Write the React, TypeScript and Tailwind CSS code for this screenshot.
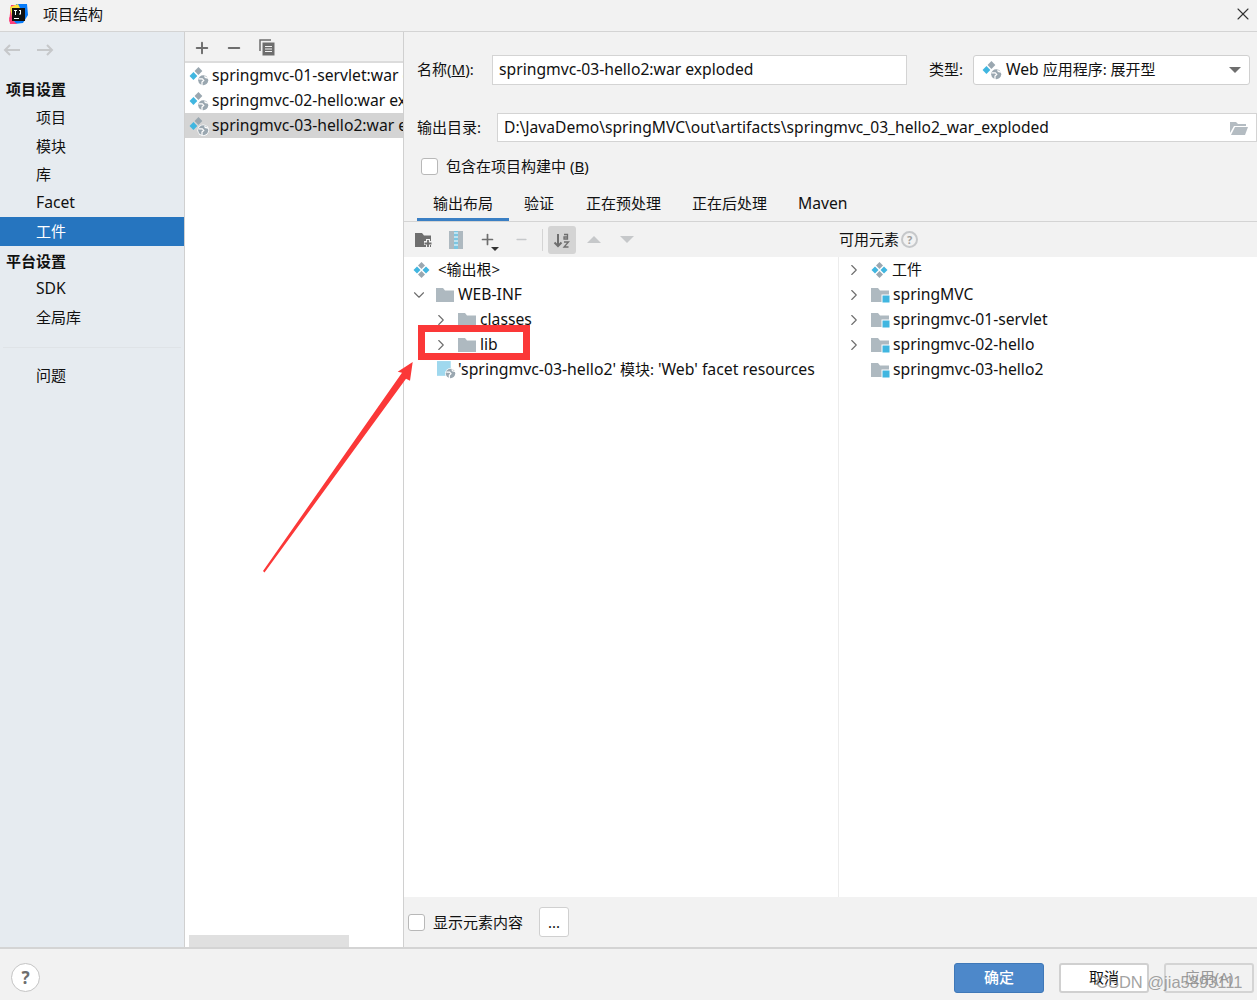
import { ChevronDown, ChevronRight, Minus, Plus, X } from 'lucide-react';

const FONT = "font-['Noto_Sans','Noto_Sans_CJK_SC',sans-serif]";

// latin runs in the reference come out a little wider than the CJK ones
function sizeFor(text: string) {
  return /[a-z]/i.test(text) ? 'text-[15.7px]' : 'text-[15px]';
}

function GlobeBadge() {
  return (
    <>
      <circle cx="12.800" cy="12.800" r="5.200" fill="#fff" />
      <circle cx="12.800" cy="12.800" r="4.500" fill="#9aa7b0" />
      <path d="M8.800 11.500h3.200l1.300 1.500-1.600 1.500v2.800M14.200 8.600l.4 1.700 2.600.6" stroke="#fff" strokeWidth="1.100" fill="none" />
    </>
  );
}

function ArtifactIcon({ globe = false, size = 18 }: { globe?: boolean; size?: number }) {
  return (
    <svg width={size} height={size} viewBox="0 0 18 18" className="shrink-0">
      <path d="M8.500 1 12 4.500 8.500 8 5 4.500Z" fill="#9aa7b0" />
      <path d="M4 5.500 7.500 9 4 12.500.5 9Z" fill="#40b6e0" />
      {globe ? (
        <GlobeBadge />
      ) : (
        <>
          <path d="M13 5.500 16.500 9 13 12.500 9.500 9Z" fill="#40b6e0" />
          <path d="M8.500 10 12 13.500 8.500 17 5 13.500Z" fill="#9aa7b0" />
        </>
      )}
    </svg>
  );
}

function FolderIcon({ module = false }: { module?: boolean }) {
  return (
    <svg width="19" height="16" viewBox="0 0 19 16" className="shrink-0">
      <path d="M0 1h7l2 2.500h9V15H0Z" fill="#aeb9c0" />
      {module && <rect x="11" y="8" width="8" height="8" fill="#40b6e0" stroke="#fff" strokeWidth="1" />}
    </svg>
  );
}

function NavItem({ label, active = false }: { label: string; active?: boolean }) {
  return (
    <div className={`h-[28.5px] pl-9 flex items-center ${sizeFor(label)} ${active ? 'bg-[#2675bf] text-white' : 'text-[#111]'}`}>
      {label}
    </div>
  );
}

function TreeRow({ indent, arrow, label, icon }: { indent: string; arrow?: 'right' | 'down'; label: string; icon: React.ReactNode }) {
  return (
    <div className={`h-[25px] flex items-center text-[#111] whitespace-nowrap ${indent} ${sizeFor(label)}`}>
      <span className="w-[26px] shrink-0 flex justify-start text-[#6e6e6e]">
        {arrow === 'right' && <ChevronRight size={18} strokeWidth={1.5} />}
        {arrow === 'down' && <ChevronDown size={18} strokeWidth={1.5} />}
      </span>
      {icon}
      <span className="ml-[3px]">{label}</span>
    </div>
  );
}

function Checkbox() {
  return <span className="w-[17px] h-[17px] rounded-[3px] bg-white border border-[#b8b8b8] shrink-0" />;
}

export default function App() {
  const artifacts = ['springmvc-01-servlet:war exploded', 'springmvc-02-hello:war exploded', 'springmvc-03-hello2:war exploded'];
  const modules = ['springMVC', 'springmvc-01-servlet', 'springmvc-02-hello'];

  return (
    <div className={`relative w-[1257px] h-[1000px] overflow-hidden flex flex-col bg-[#f2f2f2] text-[#111] ${FONT}`}>
      {/* title bar */}
      <div className="h-[32px] shrink-0 flex items-center pl-[8px] pr-[4px] pb-[3px] border-b border-[#d4d4d4]">
        <svg width="21" height="21" viewBox="0 0 21 21">
          <path d="M3 1h9L5 14 1 18Z" fill="#fc3f7a" />
          <path d="M8 0h11l1 11-5 8-9 1Z" fill="#087cfa" />
          <path d="M2 3 10 0l3 6-9 7Z" fill="#fde13a" />
          <path d="M1 13l8 7-7 0Z" fill="#fc3f7a" />
          <rect x="4" y="4" width="13" height="13" fill="#111" />
          <rect x="6" y="14" width="5" height="1" fill="#fff" />
          <path d="M6 6h3v1H8v4H7V7H6Zm5 0h2v4.500h-2v-1h1V7h-1Z" fill="#fff" />
        </svg>
        <span className="ml-[14px] text-[15px]">项目结构</span>
        <X size={20} strokeWidth={1.3} className="ml-auto text-[#333]" />
      </div>

      <div className="flex-1 flex min-h-0">
        {/* sidebar */}
        <aside className="w-[185px] shrink-0 bg-[#e6ebf0] border-r border-[#d0d0d0] flex flex-col">
          <div className="h-[36px] flex items-center pl-[3px] gap-[15px]">
            <svg width="18" height="14" viewBox="0 0 18 14" fill="none" stroke="#c6c8ca" strokeWidth="2"><path d="M17 7H2M7 2 2 7l5 5" /></svg>
            <svg width="18" height="14" viewBox="0 0 18 14" fill="none" stroke="#c6c8ca" strokeWidth="2"><path d="M1 7h15M11 2l5 5-5 5" /></svg>
          </div>
          <div className="h-[28px] mt-[7px] pl-[6px] flex items-center text-[15px] font-bold">项目设置</div>
          <NavItem label="项目" />
          <NavItem label="模块" />
          <NavItem label="库" />
          <NavItem label="Facet" />
          <NavItem label="工件" active />
          <div className="h-[26px] mt-[3px] pl-[6px] flex items-center text-[15px] font-bold">平台设置</div>
          <NavItem label="SDK" />
          <NavItem label="全局库" />
          <div className="h-px mt-[15px] mb-[13px] mx-[3px] bg-[#dfe3e7]" />
          <NavItem label="问题" />
        </aside>

        {/* artifact list */}
        <section className="w-[219px] shrink-0 bg-white border-r border-[#d0d0d0] flex flex-col overflow-hidden">
          <div className="h-[31px] shrink-0 bg-[#f2f2f2] border-b-2 border-[#dcdcdc] flex items-center pl-[8px] pt-[2px] text-[#6e6e6e]">
            <Plus size={18} strokeWidth={2.6} />
            <Minus size={18} strokeWidth={2.6} className="ml-[14px]" />
            <svg width="16" height="17" viewBox="0 0 16 17" className="ml-[16px]" fill="none" stroke="#6e6e6e">
              <path d="M1 12V1h11" strokeWidth="1.500" />
              <rect x="3.500" y="3.500" width="12" height="13" fill="#6e6e6e" stroke="none" />
              <path d="M6 7.500h7M6 10h7M6 12.500h7" stroke="#f2f2f2" />
            </svg>
          </div>
          <div className="flex-1 flex flex-col">
            {artifacts.map((name, i) => (
              <div key={name} className={`h-[25px] flex items-center pl-[4px] gap-[3px] text-[15.7px] whitespace-nowrap ${i === 2 ? 'bg-[#d4d4d4]' : ''}`}>
                <ArtifactIcon globe size={20} />
                <span>{name}</span>
              </div>
            ))}
          </div>
          <div className="h-[12px] w-[160px] ml-[4px] shrink-0 bg-[#e0e0e0]" />
        </section>

        {/* detail */}
        <main className="flex-1 min-w-0 flex flex-col">
          <div className="h-[23px] shrink-0" />
          <div className="h-[30px] shrink-0 flex items-center pl-[13px] text-[15px] whitespace-nowrap">
            <span className="w-[75px] pb-[2px]">名称(<span className="underline">M</span>):</span>
            <div className="w-[415px] h-[30px] bg-white border border-[#d4d4d4] flex items-center px-[6px] pb-px text-[15.7px]">springmvc-03-hello2:war exploded</div>
            <span className="ml-[22px] w-[44px] pb-[2px]">类型:</span>
            <div className="w-[277px] h-[30px] bg-white border border-[#d0d0d0] rounded-[3px] flex items-center pl-[8px] gap-[4px]">
              <ArtifactIcon globe size={20} />
              <span><span className="text-[15.7px]">Web</span> 应用程序: 展开型</span>
              <span className="ml-auto mr-[8px] w-0 h-0 border-x-[6px] border-x-transparent border-t-[6px] border-t-[#6e6e6e]" />
            </div>
          </div>
          <div className="h-[29px] mt-[28px] shrink-0 flex items-center pl-[13px] text-[15px]">
            <span className="w-[80px]">输出目录:</span>
            <div className="flex-1 h-[29px] bg-white border border-[#d4d4d4] flex items-center pl-[6px] pr-[8px] text-[15.6px]">
              <span className="whitespace-nowrap">D:\JavaDemo\springMVC\out\artifacts\springmvc_03_hello2_war_exploded</span>
              <svg width="18" height="14" viewBox="0 0 18 14" className="ml-auto" fill="#b4bcc2">
                <path d="M0 1h6l2 2h8v2H4L0 12Z" />
                <path d="M5 6h13l-3 8H1Z" />
              </svg>
            </div>
          </div>
          <div className="h-[17px] mt-[16px] shrink-0 flex items-center pl-[17px] gap-[8px] text-[15px]">
            <Checkbox />
            <span>包含在项目构建中 (<span className="underline">B</span>)</span>
          </div>
          {/* tabs */}
          <div className="h-[32px] mt-[15px] shrink-0 flex pl-[13px] border-b border-[#d4d4d4] text-[15px] whitespace-nowrap">
            <div className="w-[92px] text-center border-b-[3px] border-[#3a7fc4] pt-[2px]">输出布局</div>
            <div className="ml-[15px] w-[30px] pt-[2px]">验证</div>
            <div className="ml-[32px] w-[76px] pt-[2px]">正在预处理</div>
            <div className="ml-[30px] w-[76px] pt-[2px]">正在后处理</div>
            <div className="ml-[30px] pt-[2px] text-[15.7px]">Maven</div>
          </div>
          {/* layout toolbar */}
          <div className="h-[35px] shrink-0 flex items-center pl-[11px] text-[15px] whitespace-nowrap">
            <svg width="18" height="16" viewBox="0 0 18 16">
              <path d="M0 1h7l2 2.500h7V15H0Z" fill="#6e6e6e" />
              <path d="M13 7v8M9 11h8" stroke="#f2f2f2" strokeWidth="4" />
              <path d="M13 8v7M9.500 11.500h7" stroke="#6e6e6e" strokeWidth="1.800" />
            </svg>
            <svg width="14" height="18" viewBox="0 0 14 18" className="ml-[16px]">
              <rect width="14" height="18" fill="#aeb9c0" />
              <rect x="5" width="4" height="18" fill="#7cc6e2" />
              <path d="M5 2h4M5 6h4M5 10h4M5 14h4" stroke="#fff" />
            </svg>
            <span className="ml-[16px] relative w-[18px] h-[18px] text-[#6e6e6e]">
              <Plus size={17} strokeWidth={2.4} />
              <span className="absolute right-[-2px] bottom-[-2px] w-0 h-0 border-x-[4px] border-x-transparent border-t-[4px] border-t-[#333]" />
            </span>
            <Minus size={15} strokeWidth={2.4} className="ml-[17px] text-[#c6c8ca]" />
            <span className="ml-[13px] w-px h-[22px] bg-[#d4d4d4]" />
            <span className="ml-[5px] w-[28px] h-[28px] bg-[#d4d4d4] rounded-[3px] flex items-center justify-center">
              <svg width="18" height="18" viewBox="0 0 18 18" fill="none" stroke="#6e6e6e">
                <path d="M5 3v12M1.500 11.500 5 15l3.500-3.500" strokeWidth="2" />
                <path d="M11 3.500h3.500V8H11V6h3.500M11 11h4.500L11 16h4.500" strokeWidth="1.300" />
              </svg>
            </span>
            <span className="ml-[11px] w-0 h-0 border-x-[7.500px] border-x-transparent border-b-[7px] border-b-[#c6c8ca]" />
            <span className="ml-[19px] w-0 h-0 border-x-[7.500px] border-x-transparent border-t-[7px] border-t-[#c6c8ca]" />
            <span className="ml-[205px] flex items-center gap-[2px]">
              可用元素
              <span className="w-[17px] h-[17px] rounded-full border-2 border-[#c6c8ca] text-[11px] leading-none font-bold text-[#a0a0a0] flex items-center justify-center">?</span>
            </span>
          </div>
          {/* trees */}
          <div className="flex-1 flex min-h-0 bg-white">
            <div className="w-[435px] shrink-0 border-r border-[#ececec] pl-[6px]">
              <div className="h-[25px] flex items-center pl-[3px] gap-[7px] text-[15px]"><ArtifactIcon /><span>&lt;输出根&gt;</span></div>
              <TreeRow indent="" arrow="down" label="WEB-INF" icon={<FolderIcon />} />
              <TreeRow indent="pl-[22px]" arrow="right" label="classes" icon={<FolderIcon />} />
              <TreeRow indent="pl-[22px]" arrow="right" label="lib" icon={<FolderIcon />} />
              <div className="h-[25px] flex items-center pl-[27px] gap-[2px] text-[15px] whitespace-nowrap">
                <svg width="19" height="19" viewBox="0 0 18 18" className="shrink-0">
                  <path d="M0 1h13v14H0Z" fill="#9fd8ee" />
                  <GlobeBadge />
                </svg>
                <span>
                  <span className="text-[15.8px]">'springmvc-03-hello2'</span> 模块: <span className="text-[15.8px]">'Web' facet resources</span>
                </span>
              </div>
            </div>
            <div className="flex-1 pl-[6px]">
              <TreeRow indent="" arrow="right" label="工件" icon={<ArtifactIcon />} />
              {modules.map(name => (
                <TreeRow key={name} indent="" arrow="right" label={name} icon={<FolderIcon module />} />
              ))}
              <TreeRow indent="" label="springmvc-03-hello2" icon={<FolderIcon module />} />
            </div>
          </div>
          {/* bottom options */}
          <div className="h-[50px] shrink-0 flex items-center pl-[4px] text-[15px]">
            <Checkbox />
            <span className="ml-[8px]">显示元素内容</span>
            <div className="ml-[16px] w-[30px] h-[30px] bg-white border border-[#d0d0d0] rounded-[3px] flex items-center justify-center">...</div>
          </div>
        </main>
      </div>

      {/* footer */}
      <footer className="h-[53px] shrink-0 border-t-2 border-[#d4d4d4] flex items-center pl-[11px] pr-[3px] pt-[6px] text-[15px]">
        <span className="w-[29px] h-[29px] rounded-full bg-white border border-[#c4c4c4] flex items-center justify-center text-[17px] font-bold text-[#6e6e6e]">?</span>
        <button className="ml-auto w-[90px] h-[30px] rounded-[3px] bg-[#4d88ca] border border-[#3f78b8] text-white font-medium">确定</button>
        <button className="ml-[15px] w-[90px] h-[30px] rounded-[3px] bg-white border-2 border-[#d0d0d0]">取消</button>
        <button className="ml-[15px] w-[90px] h-[30px] rounded-[3px] border-2 border-[#d4d4d4] text-[#9a9a9a]">应用(A)</button>
      </footer>

      {/* annotations on top of the screenshot */}
      <div className="absolute left-[418px] top-[325px] w-[112px] h-[35px] border-[7px] border-[#fb3838]" />
      <svg className="absolute left-0 top-0 pointer-events-none" width="1257" height="1000">
        <path d="M263 571 402 372.800 397.700 371.700 412.700 362 410 380.700 406 378.800 264.500 572.500Z" fill="#fb3838" />
      </svg>
      <span className="absolute left-[1096px] top-[972px] text-[16.5px] leading-[20px] text-[#8a8a8a]/80 font-['Liberation_Sans',sans-serif] whitespace-nowrap">CSDN @jia5893111</span>
    </div>
  );
}
